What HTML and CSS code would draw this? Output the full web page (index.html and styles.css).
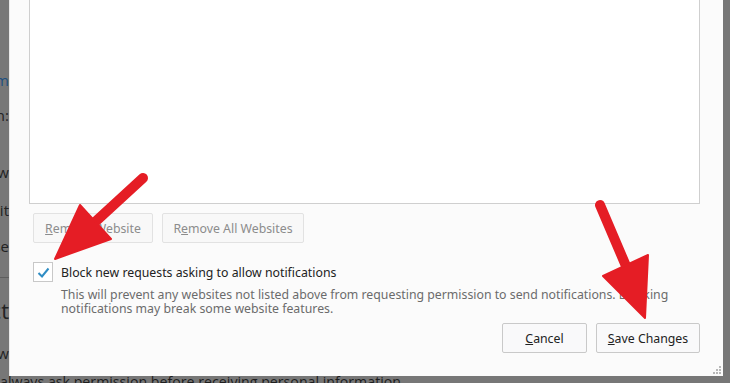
FILE: index.html
```html
<!DOCTYPE html>
<html>
<head>
<meta charset="utf-8">
<link rel="stylesheet" href="styles.css">
</head>
<body>
<div class="page">
  <div class="page-col">
    <div class="pl l1 link">Custom</div>
    <div class="pl l2">Location:</div>
    <div class="pl l3">Allow</div>
    <div class="pl l4">Edit</div>
    <div class="pl l5">Close</div>
    <div class="rule"></div>
    <div class="pl l6">Protect</div>
    <div class="pl l7">Allow</div>
  </div>
  <div class="page-bottom">always ask permission before receiving personal information</div>
</div>

<div class="dialog">
  <div class="list"></div>
  <div class="row-btns">
    <button class="btn disabled w1"><u>R</u>emove Website</button>
    <button class="btn disabled w2">R<u>e</u>move All Websites</button>
  </div>
  <div class="check-row">
    <span class="checkbox">
      <svg width="13" height="11" viewBox="0 0 13 11"><path d="M1.5 6 L5 9.5 L11.5 1.5" fill="none" stroke="#2f8dc4" stroke-width="2"/></svg>
    </span>
    <span class="check-label">Block new requests asking to allow notifications</span>
  </div>
  <p class="desc">This will prevent any websites not listed above from requesting permission to send notifications. Blocking notifications may break some website features.</p>
  <div class="footer">
    <button class="btn w3"><u>C</u>ancel</button>
    <button class="btn w4"><u>S</u>ave Changes</button>
  </div>
  <div class="grip">
    <svg width="10" height="10" viewBox="0 0 10 10" fill="#b8b8b8">
      <rect x="7" y="1" width="2" height="2"/><rect x="4" y="4" width="2" height="2"/><rect x="7" y="4" width="2" height="2"/>
      <rect x="1" y="7" width="2" height="2"/><rect x="4" y="7" width="2" height="2"/><rect x="7" y="7" width="2" height="2"/>
    </svg>
  </div>
</div>

<svg class="arrows" width="730" height="383" viewBox="0 0 730 383">
  <g fill="#e51d25" stroke="#e51d25">
    <line x1="143" y1="178" x2="94" y2="223" stroke-width="10" stroke-linecap="round"/>
    <polygon points="80,205 111,239 55,259" stroke-width="2" stroke-linejoin="round"/>
    <line x1="600" y1="205" x2="626" y2="266" stroke-width="10" stroke-linecap="round"/>
    <polygon points="603,276 648,255 645,318" stroke-width="2" stroke-linejoin="round"/>
  </g>
</svg>
</body>
</html>
```

FILE: styles.css
```css
html, body {
  margin: 0;
  padding: 0;
}
body {
  width: 730px;
  height: 383px;
  overflow: hidden;
  background: #777777;
  position: relative;
  font-family: "Noto Sans", "Open Sans", sans-serif;
}
.page {
  width: 730px;
  height: 383px;
  position: relative;
}
.page-col {
  width: 9px;
  overflow: hidden;
  display: flex;
  flex-direction: column;
  align-items: flex-end;
  padding-top: 70px;
  color: #222;
  font-size: 15px;
  font-family: "Open Sans", sans-serif;
}
.pl {
  white-space: nowrap;
  height: 20px;
  line-height: 20px;
}
.link { color: #1d4f80; }
.l2 { margin-top: 15px; }
.l3 { margin-top: 37px; }
.l4 { margin-top: 18px; }
.l5 { margin-top: 16px; }
.rule {
  width: 20px;
  height: 1px;
  background: #5e5e5e;
  margin-top: 21px;
  align-self: stretch;
}
.l6 { margin-top: 20px; font-size: 22px; height: 24px; line-height: 24px; }
.l7 { margin-top: 21px; }
.page-bottom {
  position: absolute;
  left: 0;
  top: 373px;
  font-size: 14.2px;
  line-height: 17px;
  color: #1e1e1e;
  white-space: nowrap;
  font-family: "Open Sans", sans-serif;
}

.dialog {
  position: absolute;
  left: 9px;
  top: -1px;
  width: 714px;
  height: 377px;
  box-sizing: border-box;
  background: #fbfbfb;
  border-left: 1px solid #e8e8e8;
  padding: 0 23px 0 19px;
  display: flex;
  flex-direction: column;
  font-size: 12.3px;
  color: #222;
}
.list {
  height: 205px;
  box-sizing: border-box;
  background: #fff;
  border: 1px solid #cfcfcf;
  border-top: none;
  flex: none;
}
.row-btns {
  display: flex;
  gap: 9px;
  margin-top: 9px;
  padding-left: 4px;
}
.btn {
  font-family: inherit;
  font-size: 12.3px;
  height: 30px;
  box-sizing: border-box;
  border: 1px solid #d2d2d2;
  border-radius: 2px;
  background: #f7f7f8;
  color: #222;
  padding: 0;
  margin: 0;
}
.btn.disabled {
  color: #8c8c8c;
  border-color: #e2e2e2;
  background: #f8f8f8;
}
.w1 { width: 120px; }
.w2 { width: 142px; }
.w3 { width: 85px; }
.w4 { width: 104px; }
.check-row {
  display: flex;
  align-items: center;
  margin-top: 19px;
  padding-left: 4px;
  height: 20px;
}
.checkbox {
  width: 20px;
  height: 20px;
  box-sizing: border-box;
  border: 1px solid #c8c8c8;
  background: #fff;
  display: flex;
  align-items: center;
  justify-content: center;
  margin-right: 8px;
}
.check-label {
  white-space: nowrap;
}
.desc {
  margin: 6px 0 0 32px;
  color: #6b6b6b;
  line-height: 14px;
}
.footer {
  display: flex;
  justify-content: flex-end;
  gap: 9px;
  margin-top: 7px;
  padding-right: 0;
}
.footer .btn {
  height: 30px;
  border-color: #c9c9c9;
  background: #f9f9fa;
}
.grip {
  position: absolute;
  right: 1px;
  bottom: 1px;
  width: 10px;
  height: 10px;
  line-height: 0;
}
.arrows {
  position: absolute;
  left: 0;
  top: 0;
}
```
